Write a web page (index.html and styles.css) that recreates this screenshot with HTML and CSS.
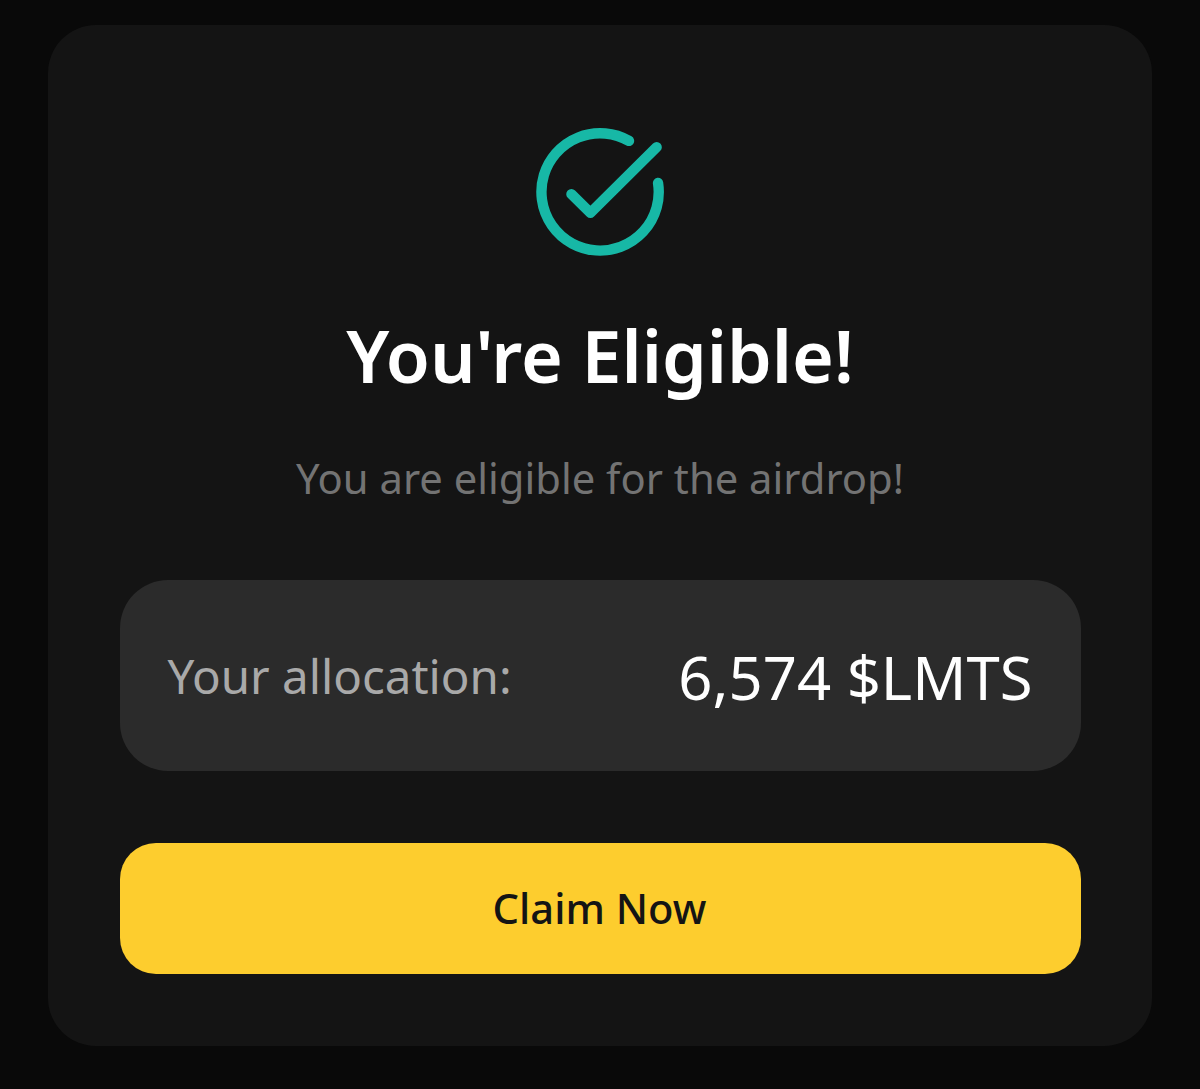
FILE: index.html
```html
<!DOCTYPE html>
<html lang="en">
<head>
    <meta charset="utf-8">
    <title>Airdrop</title>
    <link rel="stylesheet" href="styles.css">
</head>

<body>
    <div class="card">
        <svg class="check" viewBox="0 0 144 144" fill="none">
            <path d="M101 20.9A58.7 58.7 0 1 0 130.1 63"/>
            <path d="M43.4 74.2 62.4 93 128.7 27.2"/>
        </svg>
        <h1>You're Eligible!</h1>
        <p class="message">You are eligible for the airdrop!</p>
        <div class="allocation">
            <span class="label">Your allocation:</span>
            <span class="amount">6,574 $LMTS</span>
        </div>
        <button type="button" class="claim">Claim Now</button>
    </div>
</body>
</html>
```
FILE: styles.css
```css
body {
    margin: 0;
    padding: 25px 48px 43px;
    background-color: #090909;
    font-family: "Noto Sans", sans-serif;
}

.card {
    box-sizing: border-box;
    display: flex;
    flex-direction: column;
    align-items: center;
    height: 1021px;
    padding: 95px 71.5px 72px;
    border-radius: 48px;
    background-color: #141414;
}

.check {
    width: 144px;
    height: 144px;
    stroke: #17b8a6;
    stroke-width: 10.4;
    stroke-linecap: round;
    stroke-linejoin: round;
}

h1 {
    margin: 43px 0 0;
    font-size: 71.6px;
    line-height: 96px;
    font-weight: 600;
    color: #fff;
    white-space: nowrap;
}

.message {
    margin: 45px 0 0;
    font-size: 41.75px;
    line-height: 60px;
    color: #737373;
    white-space: nowrap;
}

.allocation {
    box-sizing: border-box;
    display: flex;
    align-items: center;
    justify-content: space-between;
    width: 100%;
    height: 191px;
    margin-top: 72.4px;
    padding: 0 48px;
    border-radius: 48px;
    background-color: #2b2b2b;
    white-space: nowrap;
}

.label {
    font-size: 47.5px;
    color: #a9a9a9;
}

.amount {
    padding-top: 3px;
    font-size: 59.8px;
    color: #fff;
}

.claim {
    width: 100%;
    height: 131px;
    margin-top: 72px;
    padding: 0 1px 2px 0;
    border: 0;
    border-radius: 36px;
    background-color: #fdcd2e;
    font-family: inherit;
    font-size: 41.7px;
    font-weight: 500;
    color: #141414;
}
```
